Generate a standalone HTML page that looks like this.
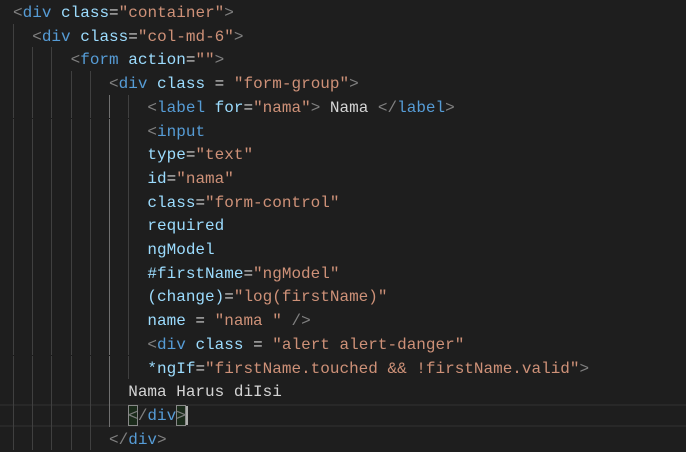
<!DOCTYPE html>
<html><head><meta charset="utf-8"><style>
html,body{margin:0;padding:0;background:#1e1e1e;width:686px;height:452px;overflow:hidden;position:relative}
.l{position:absolute;left:13px;height:23.7px;line-height:23.7px;font-family:"Liberation Mono",monospace;font-size:16px;white-space:pre;color:#d4d4d4;margin-top:2px}
.p{color:#808080}.t{color:#569cd6}.a{color:#9cdcfe}.s{color:#ce9178}
.g{position:absolute;width:1px;background:#404040}
.cur{position:absolute;left:0;width:686px;top:404px;height:19px;border-top:2px solid #282828;border-bottom:2px solid #282828}
.bm{position:absolute;top:405px;height:19px;width:8px;border:1px solid #888;background:#1b2b1b}
</style></head><body>
<div class="cur"></div>
<div class="bm" style="left:127.5px"></div>
<div class="bm" style="left:175.5px"></div>
<div id="guides"></div>
<div class="l" style="top:0px"><span class="p">&lt;</span><span class="t">div</span> <span class="a">class</span>=<span class="s">"container"</span><span class="p">&gt;</span></div>
<div class="l" style="top:23.7px">  <span class="p">&lt;</span><span class="t">div</span> <span class="a">class</span>=<span class="s">"col-md-6"</span><span class="p">&gt;</span></div>
<div class="l" style="top:47.4px">      <span class="p">&lt;</span><span class="t">form</span> <span class="a">action</span>=<span class="s">""</span><span class="p">&gt;</span></div>
<div class="l" style="top:71.1px">          <span class="p">&lt;</span><span class="t">div</span> <span class="a">class</span> = <span class="s">"form-group"</span><span class="p">&gt;</span></div>
<div class="l" style="top:94.8px">              <span class="p">&lt;</span><span class="t">label</span> <span class="a">for</span>=<span class="s">"nama"</span><span class="p">&gt;</span> Nama <span class="p">&lt;/</span><span class="t">label</span><span class="p">&gt;</span></div>
<div class="l" style="top:118.5px">              <span class="p">&lt;</span><span class="t">input</span></div>
<div class="l" style="top:142.2px">              <span class="a">type</span>=<span class="s">"text"</span></div>
<div class="l" style="top:165.9px">              <span class="a">id</span>=<span class="s">"nama"</span></div>
<div class="l" style="top:189.6px">              <span class="a">class</span>=<span class="s">"form-control"</span></div>
<div class="l" style="top:213.3px">              <span class="a">required</span></div>
<div class="l" style="top:237px">              <span class="a">ngModel</span></div>
<div class="l" style="top:260.7px">              <span class="a">#firstName</span>=<span class="s">"ngModel"</span></div>
<div class="l" style="top:284.4px">              <span class="a">(change)</span>=<span class="s">"log(firstName)"</span></div>
<div class="l" style="top:308.1px">              <span class="a">name</span> = <span class="s">"nama "</span> <span class="p">/&gt;</span></div>
<div class="l" style="top:331.8px">              <span class="p">&lt;</span><span class="t">div</span> <span class="a">class</span> = <span class="s">"alert alert-danger"</span></div>
<div class="l" style="top:355.5px">              <span class="a">*ngIf</span>=<span class="s">"firstName.touched &amp;&amp; !firstName.valid"</span><span class="p">&gt;</span></div>
<div class="l" style="top:379.2px">            Nama Harus diIsi</div>
<div class="l" style="top:402.9px">            <span class="p">&lt;/</span><span class="t">div</span><span class="p">&gt;</span></div>
<div class="l" style="top:426.6px">          <span class="p">&lt;/</span><span class="t">div</span><span class="p">&gt;</span></div>
<div style="position:absolute;left:186px;top:406px;width:2px;height:19px;background:#aeafad"></div>
<script>
var ind=[0,2,6,10,14,14,14,14,14,14,14,14,14,14,14,14,12,12,10];
var h=23.7,out='';
for(var i=0;i<ind.length;i++){
 for(var c=0;c<ind[i];c+=2){
  var act=(c==10&&i>=4&&i<=17);
  out+='<div class="g" style="left:'+(13+c*9.6).toFixed(1)+'px;top:'+(i*h).toFixed(1)+'px;height:'+h+'px;'+(act?'background:#707070':'')+'"></div>';
 }
}
document.getElementById('guides').innerHTML=out;
</script>
</body></html>
